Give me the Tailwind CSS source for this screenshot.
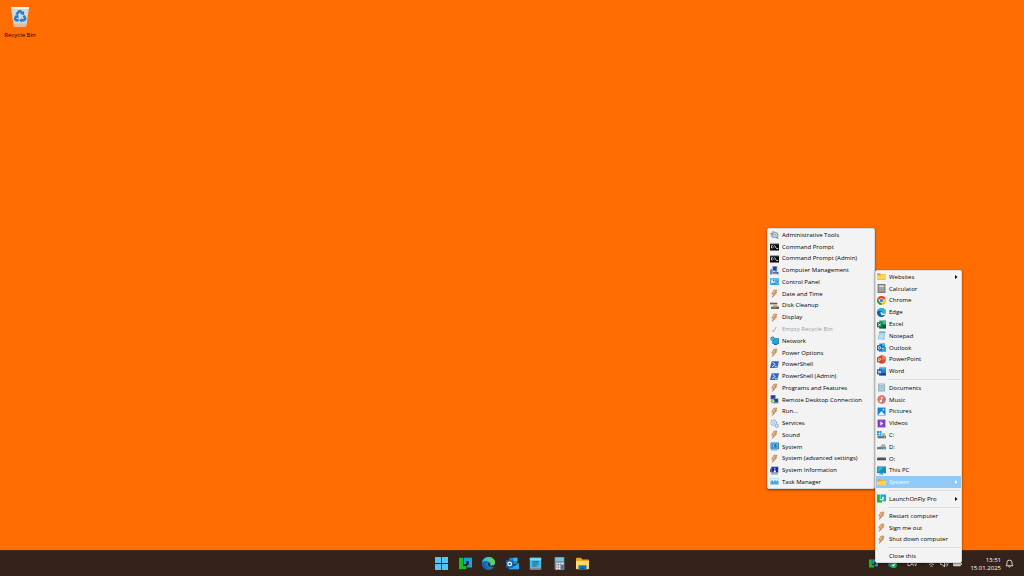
<!DOCTYPE html>
<html lang="en">

<head>
  <meta charset="UTF-8" />
  <meta name="viewport" content="width=device-width, initial-scale=1.0" />
  <title>Desktop</title>
  <script src="https://cdn.jsdelivr.net/npm/@tailwindcss/browser@4"></script>
</head>

<body class="relative flex h-screen flex-col overflow-hidden bg-[#ff6c00] font-['Open_Sans','Noto_Sans',sans-serif] text-[6px] leading-[8px] text-black">

  <!-- icon sprite, mostly on a 16x16 grid -->
  <svg class="hidden" aria-hidden="true">
    <symbol id="bin" viewBox="0 0 20 24">
      <path d="M0 1h20l-3 20q0 2-2 2H5q-2 0-2-2z" fill="#d5d6d8" />
      <path d="M0 1h20l-.4 2.400H.4z" fill="#f4f1ee" />
      <path d="M3 19h14l-.5 3q-.3 1-1.500 1H5q-1.200 0-1.500-1z" fill="#e3b99b" />
      <path d="M6.300 9.500l1.900-3q1.700-1.500 3.200.2l1.200 1.800M14 10.500l1.400 2.300q.7 2-1.500 2.800h-2M8.600 15.600H6.300q-2.200-.7-1.300-2.700l.9-1.500" fill="none" stroke="#1a7fd6" stroke-width="2.700" />
      <path d="M14.400 5.500v4.500l-4-1.700zM12 13v5.400l-3-2.700zM3.500 10.800l4.500-1.300.7 4z" fill="#1a7fd6" />
    </symbol>
    <symbol id="tools" viewBox="0 0 16 16">
      <path d="M3 5V3q0-1 1-1h4q1 0 1 1v1h4l2 3v6q0 1-1 1H4l-3-3 1-2-2-2z" fill="#a9b5c1" />
      <circle cx="9" cy="9" r="4.500" fill="#d3dde6" stroke="#8292a1" stroke-width="1.500" stroke-dasharray="2.500 1" />
      <circle cx="9" cy="9" r="1.800" fill="#f3f3f3" stroke="#4c83b5" />
      <path d="M1 6l4 1M11 14l4 1" stroke="#71808e" stroke-width="1.500" />
    </symbol>
    <symbol id="cmd" viewBox="0 0 16 16">
      <path d="M0 2h16v13H0z" fill="#9a9a9a" />
      <path d="M0 4h16v11H0z" fill="#080808" />
      <path d="M5 6.500H2.500v4H5M6.500 7v1M6.500 9.500v1M8 6l3 5M11 11.500h3.500" stroke="#eee" stroke-width="1.500" fill="none" />
    </symbol>
    <symbol id="manage" viewBox="0 0 16 16">
      <path d="M4 0h9v9H4z" fill="#8fa0b5" />
      <path d="M5.500 1.500h6v6h-6z" fill="#223f9b" />
      <path d="M2 10h13v5H2z" fill="#aab7c6" />
      <path d="M0 7l3-2 2 3-2 7H0z" fill="#4f93d8" />
      <path d="M5 12h10M9 8l6 7" stroke="#3c4c76" stroke-width="1.600" />
    </symbol>
    <symbol id="panel" viewBox="0 0 16 16">
      <rect y="2" width="16" height="12" rx="1" fill="#2ba3e0" />
      <rect x="1" y="3" width="14" height="10" fill="#66c0ee" />
      <circle cx="5" cy="7.500" r="3" fill="#f4fbff" />
      <path d="M5 7.500v-3a3 3 0 013 3z" fill="#2374b7" />
      <path d="M10 6h4M10 8.500h4M3 12h9" stroke="#1c72ae" stroke-width="1.200" />
      <path d="M12 5h1.500v2H12z" fill="#f5b93c" />
    </symbol>
    <symbol id="bolt" viewBox="0 0 16 16">
      <path d="M7 2h5.500L10 6.500h2L4 15l2-6H3z" fill="#e8903c" stroke="#a37a58" />
      <path d="M7.500 3h2.500L7 7.500h2L6 11l1.500-3H4.500z" fill="#f9bd7c" />
    </symbol>
    <symbol id="cleanup" viewBox="0 0 16 16">
      <path d="M0 3h13v3H0z" fill="#6f6044" />
      <path d="M5 6h7l2 4H6z" fill="#d9b45c" />
      <path d="M2 10h14v4H2z" fill="#555" />
      <path d="M4 11h8" stroke="#bbb" />
    </symbol>
    <symbol id="check" viewBox="0 0 16 16">
      <path d="M3.500 9.500l2.500 3 5-9" fill="none" stroke="#a5a5a5" stroke-width="1.600" />
    </symbol>
    <symbol id="network" viewBox="0 0 16 16">
      <path d="M4 4h12v10H4z" fill="#1279ad" />
      <path d="M5 5h10v8H5z" fill="#24a7db" />
      <path d="M7 14h6v2H7z" fill="#176b94" />
      <circle cx="4.500" cy="5" r="4" fill="#3380c2" />
      <path d="M1 5h7M4.500 1q-3 4 0 8" stroke="#95d3f3" fill="none" />
    </symbol>
    <symbol id="powershell" viewBox="0 0 16 16">
      <path d="M3 2h13l-3 12H0z" fill="#2f69c7" />
      <path d="M5 4l4 4-5 4M8.500 12H12" fill="none" stroke="#fff" stroke-width="1.600" />
    </symbol>
    <symbol id="remote" viewBox="0 0 16 16">
      <path d="M1 0h9v8H1z" fill="#7c8798" />
      <path d="M2 1h7v6H2z" fill="#263fb0" />
      <path d="M6 6h9v9H6z" fill="#8d98a8" />
      <path d="M7 7h7v6H7z" fill="#2343a4" />
      <circle cx="5" cy="11" r="3.500" fill="#77b84d" />
      <path d="M3 11h4M5 9l2 2-2 2" stroke="#fff" fill="none" />
    </symbol>
    <symbol id="services" viewBox="0 0 16 16">
      <circle cx="6.500" cy="6.500" r="5" fill="#d9eaf5" stroke="#91b5ce" stroke-width="2" stroke-dasharray="2.500 1" />
      <circle cx="6.500" cy="6.500" r="1.800" fill="#f3f3f3" stroke="#7da7c5" />
      <circle cx="12" cy="12" r="3" fill="#cfe3f0" stroke="#7ba7c5" stroke-width="1.500" />
    </symbol>
    <symbol id="system" viewBox="0 0 16 16">
      <rect x="1" y="1" width="15" height="12" rx="1" fill="#2675bd" />
      <path d="M2 2h13v10H2z" fill="#58b0ec" />
      <path d="M4 5h4v4H4zM10 3v7M8 5l5 4" fill="#c8ecff" stroke="#1b66ae" stroke-width="1.300" />
      <path d="M2 13h11v2H2z" fill="#88a0b3" />
    </symbol>
    <symbol id="sysinfo" viewBox="0 0 16 16">
      <path d="M2 1h13v11H2z" fill="#7989b0" />
      <path d="M3 2h11v9H3z" fill="#1727a9" />
      <path d="M8.500 3v2M8.500 6v4M6.500 10h4" stroke="#fff" stroke-width="2" />
      <path d="M2 13h12v2H2z" fill="#7887a3" />
      <path d="M0 5h2v6H0z" fill="#465d9c" />
    </symbol>
    <symbol id="taskmgr" viewBox="0 0 16 16">
      <path d="M0 2h16v12H0z" fill="#a9d6ea" />
      <path d="M1 3h14v10H1z" fill="#e5f6fc" />
      <path d="M1 13V9l3-4 2 4 3-4 2 3 2-3 2 4v4z" fill="#48a9d8" />
    </symbol>
    <symbol id="folder" viewBox="0 0 16 16">
      <path d="M0 3q0-1 1-1h4l2 2h8q1 0 1 1v2H0z" fill="#e9a91c" />
      <path d="M0 6h6l2-1h8v8q0 1-1 1H1q-1 0-1-1z" fill="#ffd45d" />
      <path d="M1 13h14" stroke="#e7ab28" />
    </symbol>
    <symbol id="calc" viewBox="0 0 16 16">
      <path d="M1 0h14v16H1z" fill="#77797b" />
      <path d="M3 2h10v12H3z" fill="#aeb0b2" />
      <path d="M4 3h8v2H4z" fill="#e3e5e6" />
      <path d="M4 7h8M4 10h8M4 13h8" stroke="#808386" stroke-width="1.500" stroke-dasharray="2 1" />
    </symbol>
    <symbol id="chrome" viewBox="0 0 16 16">
      <circle cx="8" cy="8" r="8" fill="#fbc116" />
      <path d="M8 8L1.070 4A8 8 0 0114.930 4z" fill="#e33b2e" />
      <path d="M1.070 4L4.500 10 8 12 8 16A8 8 0 011.070 4z" fill="#229a4b" />
      <circle cx="8" cy="8" r="4" fill="#fff" />
      <circle cx="8" cy="8" r="3" fill="#3b7ded" />
    </symbol>
    <symbol id="edge" viewBox="0 0 16 16">
      <circle cx="8" cy="8" r="8" fill="#167ac8" />
      <path d="M0 7C1 2 5 0 8 0c5 0 8 4 8 7 0 3-3 4.500-6 3.500C12 8 9 4.500 5 5 2.500 5.200 1 6 0 7z" fill="#2fb3dc" />
      <path d="M11 .6c3.500 1.500 5 4 5 6.400 0 3-3 4.400-6 3.400 3-2 4-6 1-9.800z" fill="#4cc78c" />
      <path d="M6 6c-3 3-1 9 5 9-6 3-12-3-10-8 1-2 3-2 5-1z" fill="#1059a5" />
      <path d="M7 7c-2 4 2 7 8 5l1-3c-2 2-5 2-6 1.500C11 9 9 7 7 7z" fill="#f3fbff" />
    </symbol>
    <symbol id="edgebar" viewBox="0 0 16 16">
      <circle cx="8" cy="8" r="8" fill="#1679ca" />
      <path d="M0 7C1 2 5 0 8 0c5 0 8 4 8 7 0 3-3 4.500-6 3.500C12 8 9 4.500 5 5 2.500 5.200 1 6 0 7z" fill="#38bfe3" />
      <path d="M9 .1c5 .4 7 4 7 7 0 3-3 4.400-6 3.400 2-2 0-5-3-5.500z" fill="#5bcf63" />
      <path d="M6 6c-3 3-1 9 5 9-6 3-12-3-10-8 1-2 3-2 5-1z" fill="#1763b3" />
      <path d="M8 7c-2 3 1 6 7 5 1 0 1-1 1-3-2 2-5 2-6 1.500C10.500 9 10 7.500 8 7z" fill="#33241b" />
    </symbol>
    <symbol id="excel" viewBox="0 0 16 16">
      <path d="M4 1h12v14H4z" fill="#21a366" />
      <path d="M10 1h6v7h-6z" fill="#33c481" />
      <path d="M4 8h12v7H4z" fill="#185c37" />
      <path d="M0 4h9v9H0z" fill="#107c41" />
      <path d="M2.500 6l4 5M6.500 6l-4 5" stroke="#fff" stroke-width="1.500" />
    </symbol>
    <symbol id="notepad" viewBox="0 0 16 16">
      <path d="M4 1h11l-2 14H1z" fill="#98cce7" />
      <path d="M4 1h11v2H4z" fill="#6e9eb7" />
      <path d="M5 5h8M4.500 7.500h8M4 10h8M3.500 12.500h8" stroke="#d9f2fd" />
      <path d="M13 8l1 7H9z" fill="#bac6cd" />
    </symbol>
    <symbol id="outlook" viewBox="0 0 16 16">
      <path d="M4 1h10v8H4z" fill="#1a86d0" />
      <path d="M9 1h5v4H9z" fill="#41b8ee" />
      <path d="M3 8l7 3 6-4v8H3z" fill="#1274c4" />
      <path d="M3 15l13-7v7z" fill="#2ea6e6" />
      <path d="M0 4h9v9H0z" fill="#0f64b5" />
      <circle cx="4.500" cy="8.500" r="2.200" fill="none" stroke="#fff" stroke-width="1.500" />
    </symbol>
    <symbol id="powerpoint" viewBox="0 0 16 16">
      <circle cx="8.500" cy="8" r="7.500" fill="#d35230" />
      <path d="M9 .5a7.500 7.500 0 017 7.500H9z" fill="#f27a54" />
      <path d="M0 4h9v9H0z" fill="#c43e1c" />
      <path d="M3 12V6h2q2 0 2 1.700T5 9.500H3" fill="none" stroke="#fff" stroke-width="1.300" />
    </symbol>
    <symbol id="word" viewBox="0 0 16 16">
      <path d="M4 1h12v14H4z" fill="#2b7cd3" />
      <path d="M4 1h12v4H4z" fill="#41a5ee" />
      <path d="M4 11h12v4H4z" fill="#103f91" />
      <path d="M0 4h9v9H0z" fill="#185abd" />
      <path d="M1.800 6l1.300 5 1.400-4 1.400 4 1.300-5" fill="none" stroke="#fff" stroke-width="1.100" />
    </symbol>
    <symbol id="documents" viewBox="0 0 16 16">
      <path d="M2 1h12v14H2z" fill="#8ba8c0" />
      <path d="M4 3h8M4 6h3M9 6h3M4 9h8M4 12h8" stroke="#e3eff8" stroke-width="1.500" />
    </symbol>
    <symbol id="music" viewBox="0 0 16 16">
      <circle cx="8" cy="8" r="7.500" fill="#e07a5c" />
      <path d="M8 .5a7.500 7.500 0 010 15z" fill="#c77085" />
      <path d="M8 11V4l3 1.500" fill="none" stroke="#fff" stroke-width="1.500" />
      <circle cx="6.700" cy="11" r="2" fill="#fff" />
    </symbol>
    <symbol id="pictures" viewBox="0 0 16 16">
      <path d="M1 1h14v14H1z" fill="#1684d8" />
      <path d="M2 14l6-7 6 7z" fill="#e7f7ff" />
      <circle cx="11.500" cy="4.500" r="1.500" fill="#fff" />
    </symbol>
    <symbol id="videos" viewBox="0 0 16 16">
      <path d="M1 1h14v14H1z" fill="#8d48cf" />
      <path d="M3 2v12M13 2v12" stroke="#6430a2" stroke-width="1.500" stroke-dasharray="2 1" />
      <path d="M6 4.500l5 3.500-5 3.500z" fill="#fff" />
    </symbol>
    <symbol id="drivec" viewBox="0 0 16 16">
      <path d="M0 0h3.500v3.500H0zM4.500 0H8v3.500H4.500zM0 4.500h3.500V8H0zM4.500 4.500H8V8H4.500z" fill="#1598dd" />
      <path d="M9 4h5l2 5H2l7-1z" fill="#aab1b7" />
      <path d="M1 9h15v4H1z" fill="#69737c" />
      <path d="M12 10h2v2h-2z" fill="#8cdb87" />
    </symbol>
    <symbol id="drived" viewBox="0 0 16 16">
      <path d="M9 4h5l2 5H1l5-1z" fill="#aab1b7" />
      <path d="M0 9h16v4H0z" fill="#657b90" />
      <path d="M11 10h3v2h-3z" fill="#53c5f6" />
    </symbol>
    <symbol id="driveo" viewBox="0 0 16 16">
      <path d="M1 6h14l1 2v3H0V8z" fill="#46484b" />
      <path d="M1 7h14" stroke="#a0a2a5" />
    </symbol>
    <symbol id="pc" viewBox="0 0 16 16">
      <rect y="1" width="16" height="12" rx="1" fill="#16749a" />
      <path d="M1 2h14v10H1z" fill="#2db8d9" />
      <path d="M1 12L12 2h3v10z" fill="#168db9" />
      <path d="M6 13h4v1h2v1H4v-1h2z" fill="#607d8b" />
    </symbol>
    <symbol id="launch" viewBox="0 0 16 16">
      <path d="M0 1h5v10h4v4H0z" fill="#16be20" />
      <path d="M6 1h10v12h-6v-3h2V5H9v4H6z" fill="#17a6d9" />
    </symbol>
    <symbol id="windows" viewBox="0 0 16 16">
      <path d="M0 0h7.500v7.500H0zM8.500 0H16v7.500H8.500zM0 8.500h7.500V16H0zM8.500 8.500H16V16H8.500z" fill="#55c4f2" />
    </symbol>
    <symbol id="notebar" viewBox="0 0 16 16">
      <rect x="1" y="1" width="14" height="14" rx="1" fill="#46bce6" />
      <path d="M1 1h14v3H1z" fill="#79dcf7" />
      <path d="M4 6h8M4 8.500h8M4 11h6" stroke="#16638c" stroke-width="1.300" />
      <path d="M1 14h14v2H1z" fill="#a66a52" />
    </symbol>
    <symbol id="calcbar" viewBox="0 0 16 16">
      <rect x="2" width="12" height="16" rx="1" fill="#8d8d94" />
      <path d="M3 1h10v4H3z" fill="#6cc8f0" />
      <path d="M4 8h2M7 8h2M4 11h2M7 11h2M4 14h2M7 14h2" stroke="#f5f5f5" stroke-width="2" />
      <path d="M10 7h3v2h-3z" fill="#e9e9ed" />
      <path d="M10 10h3v5h-3z" fill="#2679b8" />
    </symbol>
    <symbol id="explorer" viewBox="0 0 16 16">
      <path d="M0 2q0-1 1-1h5l2 2h7q1 0 1 1v3H0z" fill="#e9a420" />
      <path d="M0 5h16v9q0 1-1 1H1q-1 0-1-1z" fill="#ffd965" />
      <path d="M3 15v-4q0-1 1-1h8q1 0 1 1v4z" fill="#1676c6" />
      <path d="M6 13h4v2H6z" fill="#0f5795" />
    </symbol>
  </svg>

  <main class="flex-1">
    <button class="flex w-10 flex-col items-center gap-[3px] pt-[6px]">
      <svg class="h-[22px] w-5"><use href="#bin" /></svg>
      <span class="whitespace-nowrap">Recycle Bin</span>
    </button>
  </main>

  <footer class="relative flex h-[26px] items-center justify-center border-t border-[#4b2d19] bg-[#33231a]">
    <nav id="taskbar" class="flex w-[154px] items-center justify-between"></nav>
    <div class="absolute inset-y-0 right-[10px] flex items-center text-white">
      <div class="mr-2 flex items-center gap-[10px]">
        <svg class="h-[9px] w-[9px]"><use href="#launch" /></svg>
        <svg class="h-[9px] w-[9px]" viewBox="0 0 16 16">
          <path d="M0 8q2-5 6-2l3 8H4q-4-1-4-6z" fill="#1683d2" />
          <circle cx="10" cy="10" r="6" fill="#19b24b" />
          <path d="M7 10l2 2 4-4" fill="none" stroke="#fff" stroke-width="2" />
        </svg>
        <span>LAV</span>
        <div class="flex items-center gap-1">
          <svg class="h-[9px] w-[9px]" viewBox="0 0 16 16" fill="none" stroke="#eee" stroke-width="1.500"><path d="M1 7q7-6 14 0M3.500 10q4.500-4 9 0M6 13q2-2 4 0" /></svg>
          <svg class="h-[9px] w-[9px]" viewBox="0 0 16 16" fill="none" stroke="#eee" stroke-width="1.500"><path d="M1 6h3l4-4v12l-4-4H1zM10 5q3 3 0 6M12 3q5 5 0 10" /></svg>
          <svg class="h-[9px] w-[9px]" viewBox="0 0 16 16"><rect y="4" width="14" height="9" rx="2" fill="#ddd" /><path d="M14 7h2v3h-2z" fill="#ddd" /></svg>
        </div>
      </div>
      <div class="text-right">
        <p>13:51</p>
        <p>15.01.2025</p>
      </div>
      <button class="ml-1" aria-label="Notifications">
        <svg class="h-[9px] w-[9px]" viewBox="0 0 16 16" fill="none" stroke="#fff" stroke-width="1.400"><path d="M2 12h12l-1.500-3V6.500a4.500 4.500 0 00-9 0V9zM6 13q2 3 4 0" /></svg>
      </button>
    </div>
  </footer>

  <!-- popup menus float above the desktop and the taskbar -->
  <div id="systemMenu" role="menu" class="absolute right-[149px] bottom-[87px] flex h-[261px] w-[108px] flex-col rounded-xs border border-[#d9d9d9] bg-[#f3f3f3] pl-px shadow-sm shadow-black/40"></div>
  <div id="mainMenu" role="menu" class="absolute right-[62px] bottom-[13px] flex h-[293px] w-[87px] flex-col rounded-xs border border-[#d9d9d9] bg-[#f3f3f3] shadow-sm shadow-black/40"></div>

  <script>
    const systemItems = [
      ["tools", "Administrative Tools"], ["cmd", "Command Prompt"], ["cmd", "Command Prompt (Admin)"],
      ["manage", "Computer Management"], ["panel", "Control Panel"], ["bolt", "Date and Time"],
      ["cleanup", "Disk Cleanup"], ["bolt", "Display"], ["check", "Empty Recycle Bin", "disabled"],
      ["network", "Network"], ["bolt", "Power Options"], ["powershell", "PowerShell"],
      ["powershell", "PowerShell (Admin)"], ["bolt", "Programs and Features"],
      ["remote", "Remote Desktop Connection"], ["bolt", "Run..."], ["services", "Services"],
      ["bolt", "Sound"], ["system", "System"], ["bolt", "System (advanced settings)"],
      ["sysinfo", "System Information"], ["taskmgr", "Task Manager"]
    ];

    const mainItems = [
      ["folder", "Websites", "sub"], ["calc", "Calculator"], ["chrome", "Chrome"], ["edge", "Edge"],
      ["excel", "Excel"], ["notepad", "Notepad"], ["outlook", "Outlook"], ["powerpoint", "PowerPoint"],
      ["word", "Word"],
      null,
      ["documents", "Documents"], ["music", "Music"], ["pictures", "Pictures"], ["videos", "Videos"],
      ["drivec", "C:"], ["drived", "D:"], ["driveo", "O:"], ["pc", "This PC"], ["folder", "System", "open"],
      null,
      ["launch", "LaunchOnFly Pro", "sub"],
      null,
      ["bolt", "Restart computer"], ["bolt", "Sign me out"], ["bolt", "Shut down computer"],
      null,
      ["", "Close this"]
    ];

    function renderMenu(id, items) {
      document.getElementById(id).innerHTML = items.map(item => {
        if (!item) {
          return `<div role="separator" class="flex h-[5px] items-center pr-px pl-3"><hr class="w-full border-[#dedede]" /></div>`;
        }
        const [icon, label, state] = item;
        const color = state === "open" ? "bg-[#91c9f7] text-white" : state === "disabled" ? "text-[#a0a0a0]" : "";
        const arrow = state === "sub" || state === "open"
          ? `<svg class="ml-auto h-1 w-1" viewBox="0 0 4 4"><path d="M1 0l2.500 2L1 4z" fill="currentColor" /></svg>` : "";
        return `
          <button role="menuitem" class="flex min-h-0 flex-1 items-center gap-[3px] pr-[3px] pl-px text-left whitespace-nowrap ${color}" ${state === "disabled" ? "disabled" : ""}>
            <svg class="h-[9px] w-[9px] shrink-0"><use href="#${icon}" /></svg>
            <span>${label}</span>${arrow}
          </button>`;
      }).join("");
    }

    renderMenu("systemMenu", systemItems);
    renderMenu("mainMenu", mainItems);

    const pinned = [["windows", "Start"], ["launch", "LaunchOnFly"], ["edgebar", "Edge"], ["outlook", "Outlook"],
      ["notebar", "Notepad"], ["calcbar", "Calculator"], ["explorer", "File Explorer"]];
    document.getElementById("taskbar").innerHTML = pinned.map(([icon, name]) =>
      `<button aria-label="${name}"><svg class="h-[13px] w-[13px]"><use href="#${icon}" /></svg></button>`
    ).join("");
  </script>
</body>

</html>
